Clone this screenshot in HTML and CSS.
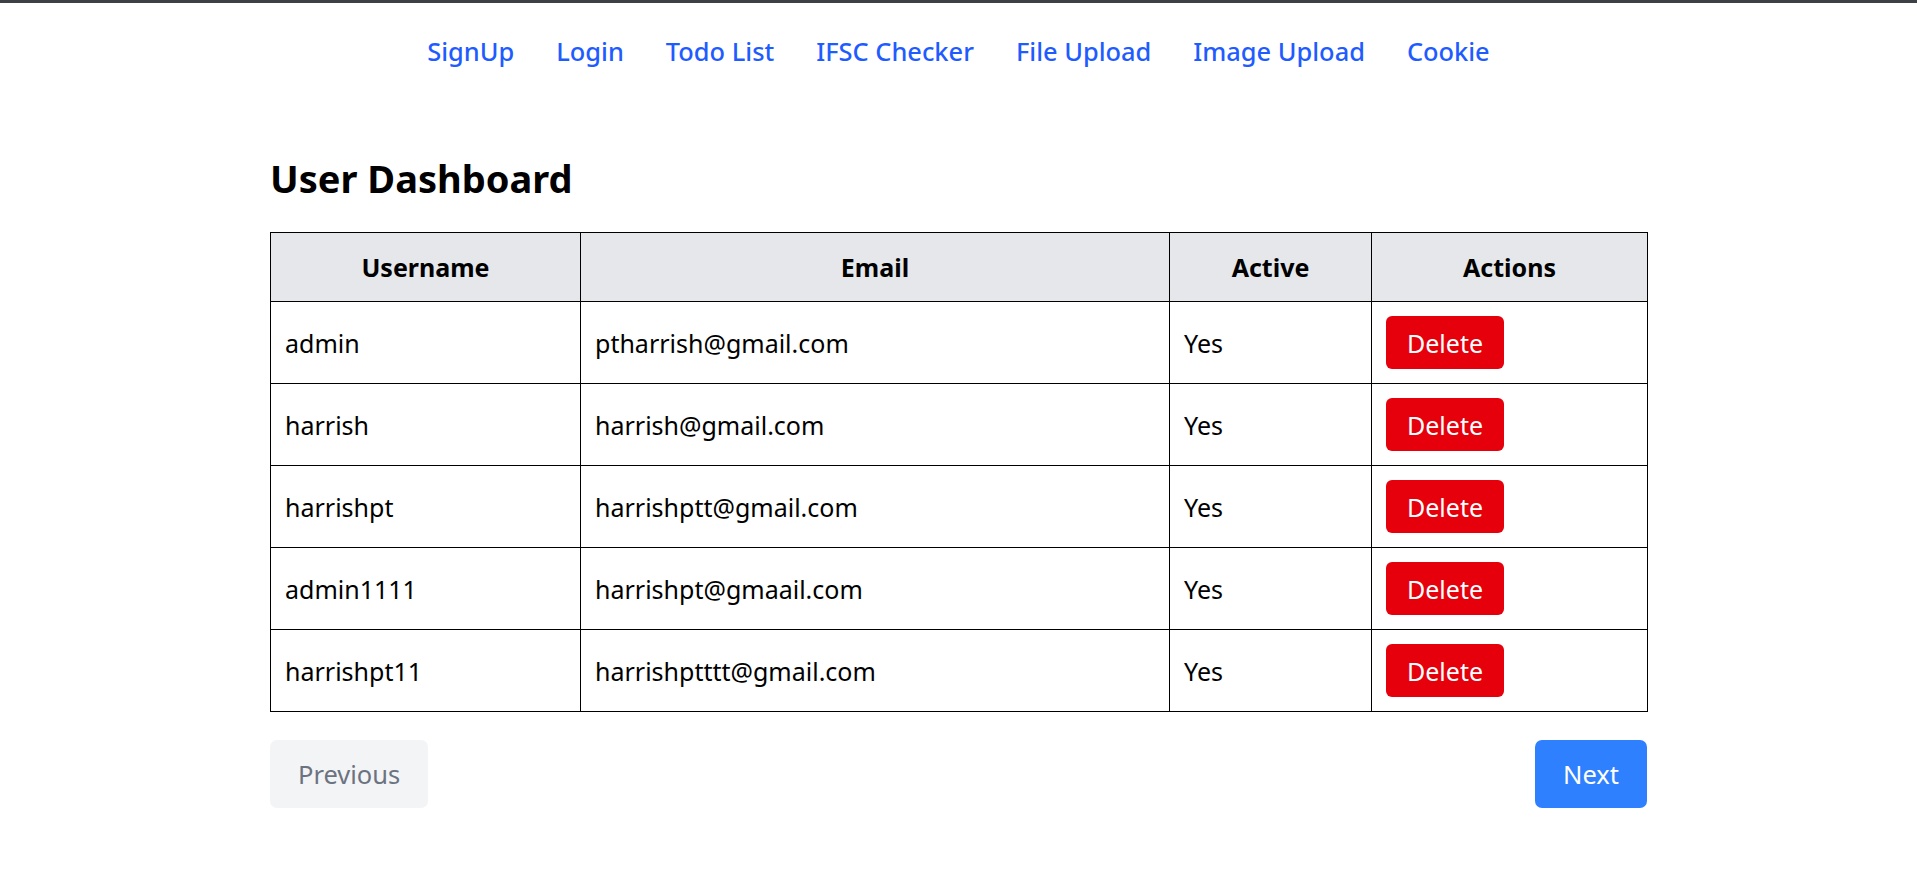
FILE: index.html
```html
<!DOCTYPE html>
<html lang="en">
<head>
<meta charset="utf-8">
<title>User Dashboard</title>
<link rel="stylesheet" href="styles.css">
</head>
<body>
<div class="topbar"></div>
<nav class="nav">
  <a class="nav-link" href="#">SignUp</a>
  <a class="nav-link" href="#">Login</a>
  <a class="nav-link" href="#">Todo List</a>
  <a class="nav-link" href="#">IFSC Checker</a>
  <a class="nav-link" href="#">File Upload</a>
  <a class="nav-link" href="#">Image Upload</a>
  <a class="nav-link" href="#">Cookie</a>
</nav>
<main class="container">
  <h1 class="title">User Dashboard</h1>
  <table class="users">
    <colgroup>
      <col class="c-user">
      <col class="c-email">
      <col class="c-active">
      <col class="c-actions">
    </colgroup>
    <thead>
      <tr><th>Username</th><th>Email</th><th>Active</th><th>Actions</th></tr>
    </thead>
    <tbody>
      <tr><td>admin</td><td>ptharrish@gmail.com</td><td>Yes</td><td><button class="btn-delete">Delete</button></td></tr>
      <tr><td>harrish</td><td>harrish@gmail.com</td><td>Yes</td><td><button class="btn-delete">Delete</button></td></tr>
      <tr><td>harrishpt</td><td>harrishptt@gmail.com</td><td>Yes</td><td><button class="btn-delete">Delete</button></td></tr>
      <tr><td>admin1111</td><td>harrishpt@gmaail.com</td><td>Yes</td><td><button class="btn-delete">Delete</button></td></tr>
      <tr><td>harrishpt11</td><td>harrishptttt@gmail.com</td><td>Yes</td><td><button class="btn-delete">Delete</button></td></tr>
    </tbody>
  </table>
  <div class="pager">
    <button class="btn btn-prev">Previous</button>
    <button class="btn btn-next">Next</button>
  </div>
</main>
</body>
</html>
```
FILE: styles.css
```css
* { box-sizing: border-box; }
html, body { margin: 0; padding: 0; background: #fff; }
body {
  font-family: "Segoe UI", "Noto Sans", "Open Sans", sans-serif;
  color: #000;
}
.topbar { height: 3px; background: #3d4045; }
.nav {
  display: flex;
  justify-content: center;
  gap: 42px;
  padding: 27px 0 28px;
}
.nav-link {
  color: #1f5cff;
  text-decoration: none;
  font-size: 25.4px;
  font-weight: 500;
  line-height: 42px;
}
.container {
  width: 1377px;
  margin: 0 auto;
  padding-top: 50px;
}
.title {
  margin: 0 0 26px;
  font-size: 38px;
  line-height: 56px;
  font-weight: 700;
}
.users {
  width: 1377px;
  border-collapse: collapse;
  table-layout: fixed;
  font-size: 25px;
}
.c-user { width: 310px; }
.c-email { width: 589px; }
.c-active { width: 202px; }
.c-actions { width: 276px; }
.users th, .users td {
  border: 1px solid #000;
  padding: 0 14px;
  vertical-align: middle;
}
.users th {
  height: 69px;
  background: #e5e7eb;
  font-weight: 700;
  text-align: center;
}
.users td {
  height: 82px;
  text-align: left;
}
.btn-delete {
  font-family: inherit;
  font-size: 25px;
  height: 53px;
  padding: 0 21px;
  border: none;
  border-radius: 6px;
  background: #e6000c;
  color: #fff;
}
.pager {
  display: flex;
  justify-content: space-between;
  margin-top: 28px;
}
.btn {
  font-family: inherit;
  font-size: 25.5px;
  line-height: 42px;
  padding: 13px 28px;
  border: none;
  border-radius: 7px;
}
.btn-prev { background: #f3f4f6; color: #6b7280; }
.btn-next { background: #2f80ff; color: #fff; }
```
